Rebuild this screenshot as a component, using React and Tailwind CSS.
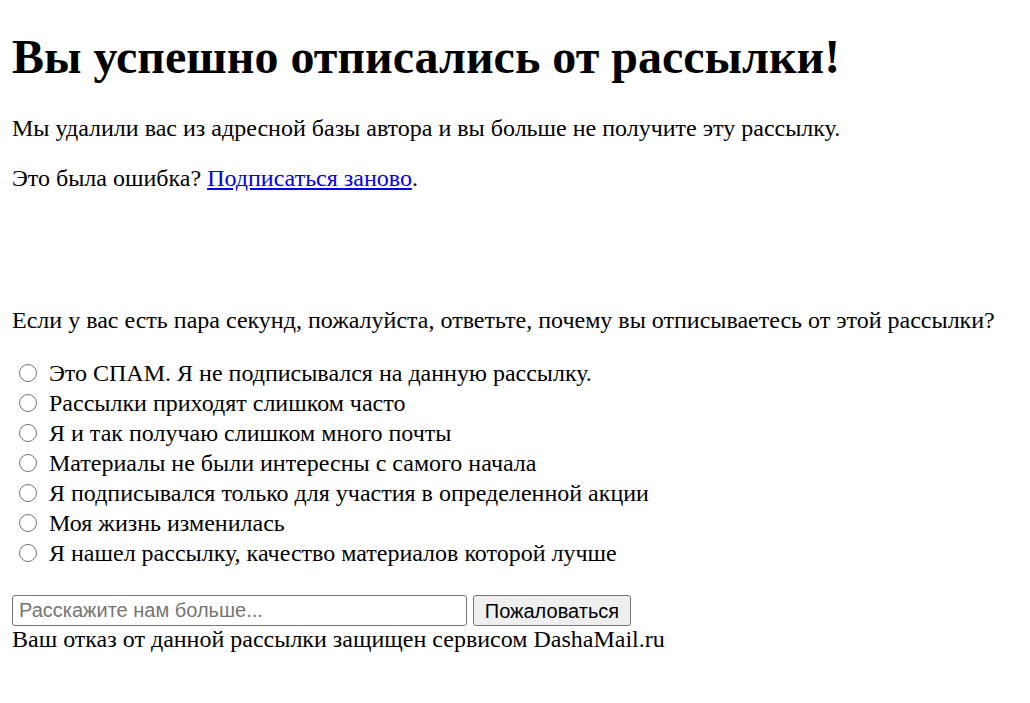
export default function App() {
  const options = [
    "Это СПАМ. Я не подписывался на данную рассылку.",
    "Рассылки приходят слишком часто",
    "Я и так получаю слишком много почты",
    "Материалы не были интересны с самого начала",
    "Я подписывался только для участия в определенной акции",
    "Моя жизнь изменилась",
    "Я нашел рассылку, качество материалов которой лучше",
  ];
  return (
    <div className="min-h-[703px] bg-white px-[12px] pt-[29px] text-black text-[24px] leading-[28px] [font-family:'Liberation_Serif','Times_New_Roman',serif]">
      <h1 className="text-[48px] leading-[55px] font-bold">Вы успешно отписались от рассылки!</h1>
      <p className="mt-[30px]">Мы удалили вас из адресной базы автора и вы больше не получите эту рассылку.</p>
      <p className="mt-[22px]">
        Это была ошибка?{" "}
        <a href="#" className="text-[#0000ee] underline">Подписаться заново</a>.
      </p>
      <p className="mt-[114px]">Если у вас есть пара секунд, пожалуйста, ответьте, почему вы отписываетесь от этой рассылки?</p>
      <div className="mt-[24px] flex flex-col">
        {options.map((o) => (
          <label key={o} className="flex h-[30px] items-center">
            <span className="ml-[7px] mr-[12px] box-border h-[18px] w-[18px] shrink-0 rounded-full border-[1.5px] border-[#767676] bg-white" />
            <span>{o}</span>
          </label>
        ))}
      </div>
      <form className="mt-[27px] flex h-[31px] items-stretch gap-[6px] [font-family:'Liberation_Sans',Arial,sans-serif] text-[20px]">
        <input
          type="text"
          placeholder="Расскажите нам больше..."
          className="box-border h-[31px] w-[455px] rounded-[3px] border border-[#767676] px-[6px] text-black placeholder:text-[#757575] outline-none"
        />
        <button type="button" className="box-border h-[31px] w-[158px] rounded-[3px] border border-[#767676] bg-[#efefef] text-black">
          Пожаловаться
        </button>
      </form>
      <p className="-mt-[1px]">Ваш отказ от данной рассылки защищен сервисом DashaMail.ru</p>
    </div>
  );
}
